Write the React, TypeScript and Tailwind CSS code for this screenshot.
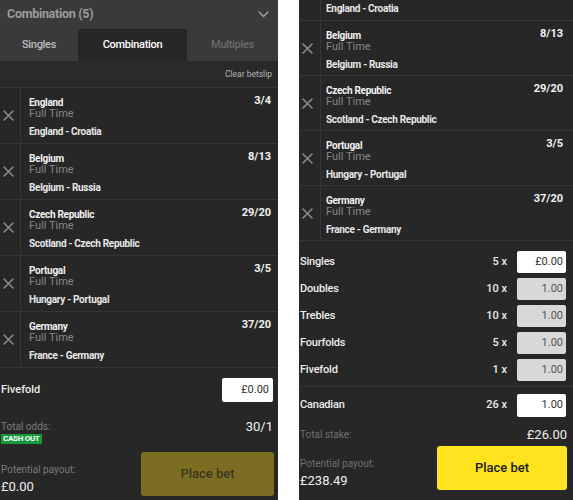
import React from "react";

type Bet = { team: string; match: string; odds: string };

const bets: Bet[] = [
  { team: "England", match: "England - Croatia", odds: "3/4" },
  { team: "Belgium", match: "Belgium - Russia", odds: "8/13" },
  { team: "Czech Republic", match: "Scotland - Czech Republic", odds: "29/20" },
  { team: "Portugal", match: "Hungary - Portugal", odds: "3/5" },
  { team: "Germany", match: "France - Germany", odds: "37/20" },
];

const font = { fontFamily: "Roboto, 'Liberation Sans', sans-serif" };

function XIcon() {
  return (
    <svg width="11" height="11" viewBox="0 0 11 11" fill="none">
      <path d="M1 1 L10 10 M10 1 L1 10" stroke="#8a8a8a" strokeWidth="1.6" strokeLinecap="round" />
    </svg>
  );
}

function BetRow({ b, right }: { b: Bet; right?: boolean }) {
  return (
    <div className={`flex border-b border-[#363636] ${right ? "h-[55px]" : "h-[56px]"}`}>
      <div className={`flex items-center border-r border-[#363636] pl-[3px] ${right ? "w-[22px]" : "w-[21px]"}`}>
        <XIcon />
      </div>
      <div className={`flex flex-1 justify-between ${right ? "pl-[5px] pr-[10px]" : "pl-[8px] pr-[7px]"}`}>
        <div className="flex flex-col pt-[10px]">
          <div className="text-[10px] leading-[10px] font-bold tracking-[-0.3px] text-[#f2f2f2]">{b.team}</div>
          <div className="text-[11px] leading-[12px] text-[#858585]">Full Time</div>
          <div className="mt-[6px] text-[10px] leading-[12px] font-bold tracking-[-0.3px] text-[#e8e8e8]">{b.match}</div>
        </div>
        <div className="pt-[6px] text-[11px] leading-[13px] font-bold text-[#f2f2f2]">{b.odds}</div>
      </div>
    </div>
  );
}

function PartialRow({ match }: { match: string }) {
  return (
    <div className="flex h-[21px] border-b border-[#363636]">
      <div className="w-[22px] border-r border-[#363636]" />
      <div className="flex flex-1 items-start pl-[5px] pt-[3px]">
        <div className="text-[10px] leading-[12px] font-bold tracking-[-0.3px] text-[#e8e8e8]">{match}</div>
      </div>
    </div>
  );
}

function Chevron() {
  return (
    <svg width="11" height="7" viewBox="0 0 11 7" fill="none">
      <path d="M1 1 L5.5 5.5 L10 1" stroke="#9a9a9a" strokeWidth="1.5" strokeLinecap="round" strokeLinejoin="round" />
    </svg>
  );
}

function LeftPanel() {
  return (
    <div className="w-[278px] h-[500px] shrink-0 overflow-hidden bg-[#272727]" style={font}>
      <div className="flex h-[29px] items-center justify-between bg-[#3a3a3a] pl-[7px] pr-[9px]">
        <span className="text-[12.5px] font-bold tracking-[-0.3px] text-[#9b9b9b]">Combination (5)</span>
        <Chevron />
      </div>
      <div className="flex h-[32px] bg-[#3a3a3a] text-[11px] font-medium tracking-[-0.3px]">
        <div className="flex w-[78px] items-center justify-center text-[#bdbdbd]">Singles</div>
        <div className="flex w-[109px] items-center justify-center bg-[#272727] text-white">Combination</div>
        <div className="flex flex-1 items-center justify-center text-[#6a6a6a]">Multiples</div>
      </div>
      <div className="flex h-[27px] items-center justify-end border-b border-[#363636] bg-[#2a2a2a] pr-[6px] text-[8.5px] text-[#b5b5b5]">
        Clear betslip
      </div>
      {bets.map((b) => (
        <BetRow key={b.team} b={b} />
      ))}
      <div className="flex items-center justify-between pl-px pr-[5px] pt-[10px]">
        <span className="text-[11px] font-medium text-[#ececec]">Fivefold</span>
        <div className="flex h-[24px] w-[51px] items-center justify-end rounded-[2px] bg-white pr-[4px] text-[11px] text-[#333]">
          £0.00
        </div>
      </div>
      <div className="mt-[18px] flex items-center justify-between pl-px pr-[5px]">
        <span className="text-[10px] leading-[12px] text-[#7a7a7a]">Total odds:</span>
        <span className="text-[13px] leading-[14px] text-[#f0f0f0]">30/1</span>
      </div>
      <div className="flex pl-px">
        <span className="flex h-[10px] items-center bg-[#159a3b] px-[2px] text-[8px] font-bold leading-none tracking-[-0.3px] text-white">
          CASH OUT
        </span>
      </div>
      <div className="mt-[8px] flex justify-between pl-px pr-[4px]">
        <div className="flex flex-col pt-[12px]">
          <span className="text-[10px] leading-[12px] text-[#7a7a7a]">Potential payout:</span>
          <span className="mt-[3px] text-[13px] leading-[16px] text-[#f0f0f0]">£0.00</span>
        </div>
        <div className="flex h-[44px] w-[133px] items-center justify-center rounded-[3px] bg-[#7b6d22] text-[13px] font-medium text-[#3b3820]">
          Place bet
        </div>
      </div>
    </div>
  );
}

const systems = [
  { name: "Singles", mult: "5 x", value: "£0.00", active: true },
  { name: "Doubles", mult: "10 x", value: "1.00" },
  { name: "Trebles", mult: "10 x", value: "1.00" },
  { name: "Fourfolds", mult: "5 x", value: "1.00" },
  { name: "Fivefold", mult: "1 x", value: "1.00" },
];

function StakeLine({ name, mult, value, active, h }: { name: string; mult: string; value: string; active?: boolean; h: string }) {
  return (
    <div className="flex items-center">
      <span className="flex-1 text-[11px] font-medium tracking-[-0.2px] text-[#ececec]">{name}</span>
      <span className="mr-[10px] text-[11px] font-medium text-[#ececec]">{mult}</span>
      <div
        className={`flex w-[49px] items-center justify-end rounded-[2px] pr-[3px] text-[11px] ${h} ${
          active ? "bg-white text-[#333]" : "bg-[#d8d8d8] text-[#555]"
        }`}
      >
        {value}
      </div>
    </div>
  );
}

function RightPanel() {
  return (
    <div className="w-[274px] h-[500px] shrink-0 overflow-hidden bg-[#272727]" style={font}>
      <PartialRow match="England - Croatia" />
      {bets.slice(1).map((b) => (
        <BetRow key={b.team} b={b} right />
      ))}
      <div className="flex flex-col gap-[5px] border-b border-[#363636] pb-[5px] pl-px pr-[7px] pt-[10px]">
        {systems.map((s) => (
          <StakeLine key={s.name} {...s} h="h-[22px]" />
        ))}
      </div>
      <div className="pl-px pr-[7px] pt-[7px]">
        <StakeLine name="Canadian" mult="26 x" value="1.00" active h="h-[23px]" />
      </div>
      <div className="mt-[11px] flex items-center justify-between pl-px pr-[6px]">
        <span className="text-[10px] leading-[12px] text-[#6f6f6f]">Total stake:</span>
        <span className="text-[13px] leading-[14px] text-[#f0f0f0]">£26.00</span>
      </div>
      <div className="mt-[4px] flex justify-between pl-px pr-[6px]">
        <div className="flex flex-col pt-[12px]">
          <span className="text-[10px] leading-[12px] text-[#6f6f6f]">Potential payout:</span>
          <span className="mt-[3px] text-[13px] leading-[16px] text-[#f0f0f0]">£238.49</span>
        </div>
        <div className="flex h-[44px] w-[130px] items-center justify-center rounded-[3px] bg-[#ffe31f] text-[13px] font-medium text-[#1c1c1c]">
          Place bet
        </div>
      </div>
    </div>
  );
}

export default function App() {
  return (
    <div className="flex h-[500px] w-[573px] overflow-hidden bg-white">
      <LeftPanel />
      <div className="w-[21px] shrink-0" />
      <RightPanel />
    </div>
  );
}
